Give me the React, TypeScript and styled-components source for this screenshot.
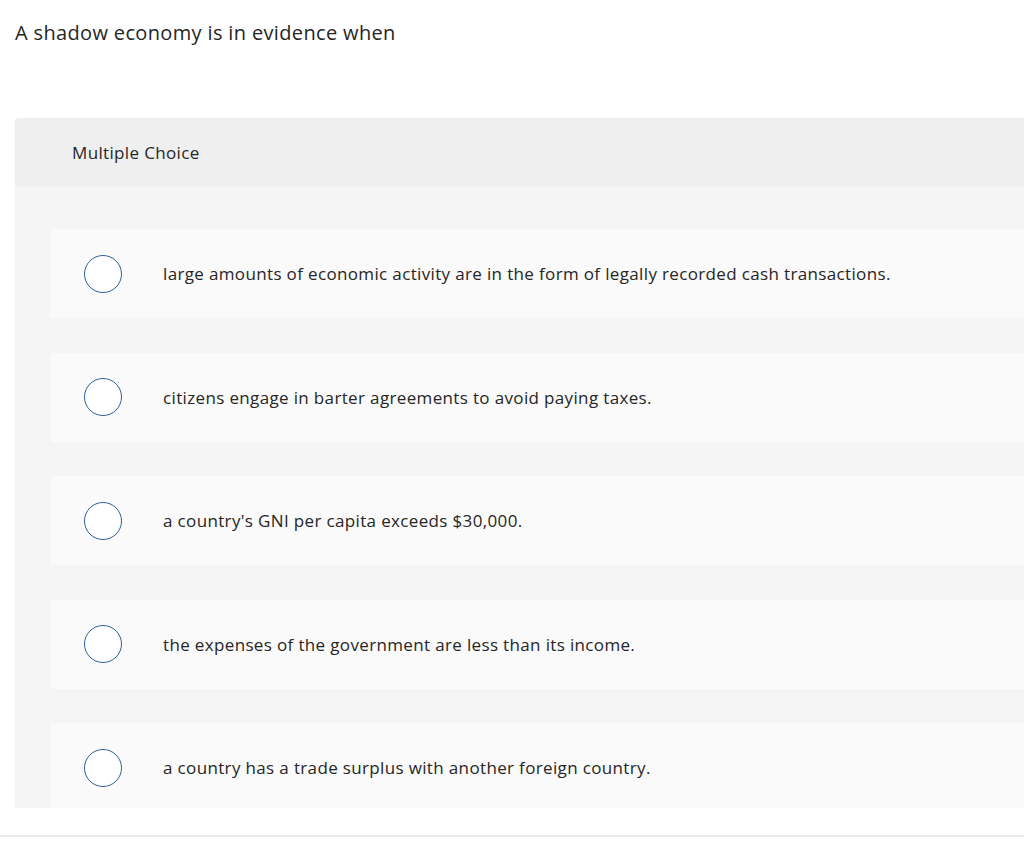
import React from "react";
import styled, { createGlobalStyle } from "styled-components";

const Global = createGlobalStyle`
  html, body { margin: 0; padding: 0; background: #ffffff; }
  body { font-family: "Open Sans", Lato, "Liberation Sans", sans-serif; color: #333; overflow: hidden; letter-spacing: 0.35px; }
`;

const Page = styled.div`
  width: 1024px;
  height: 845px;
  display: flex;
  flex-direction: column;
`;

const Question = styled.div`
  padding: 21px 0 0 15px;
  height: 118px;
  box-sizing: border-box;
  font-size: 20px;
  line-height: 24px;
  color: #262626;
`;

const Panel = styled.section`
  margin-left: 15px;
  border-radius: 4px 0 0 0;
  overflow: hidden;
  display: flex;
  flex-direction: column;
`;

const PanelHeader = styled.div`
  height: 68px;
  background: #efefef;
  display: flex;
  align-items: center;
  padding-left: 57px;
  font-size: 17px;
  color: #262626;
`;

const PanelBody = styled.div`
  background: #f5f5f5;
  height: 622px;
  overflow: hidden;
  padding: 43px 0 0 35px;
  box-sizing: border-box;
  display: flex;
  flex-direction: column;
  gap: 34.5px;
`;

const Option = styled.label`
  flex: none;
  height: 89px;
  background: #fafafa;
  border-radius: 4px 0 0 4px;
  display: flex;
  align-items: center;
  padding-left: 34px;
  font-size: 17px;
  color: #262626;
  cursor: pointer;
`;

const Radio = styled.span`
  width: 38px;
  height: 38px;
  box-sizing: border-box;
  border: 1.5px solid #2f5f9b;
  border-radius: 50%;
  background: #ffffff;
  flex: none;
`;

const OptionText = styled.span`
  margin-left: 41px;
`;

const Footer = styled.div`
  margin-top: 27px;
  border-top: 2px solid #ececec;
`;

const options = [
  "large amounts of economic activity are in the form of legally recorded cash transactions.",
  "citizens engage in barter agreements to avoid paying taxes.",
  "a country's GNI per capita exceeds $30,000.",
  "the expenses of the government are less than its income.",
  "a country has a trade surplus with another foreign country.",
];

export default function App() {
  return (
    <Page>
      <Global />
      <Question>A shadow economy is in evidence when</Question>
      <Panel>
        <PanelHeader>Multiple Choice</PanelHeader>
        <PanelBody>
          {options.map((o) => (
            <Option key={o}>
              <Radio />
              <OptionText>{o}</OptionText>
            </Option>
          ))}
        </PanelBody>
      </Panel>
      <Footer />
    </Page>
  );
}
